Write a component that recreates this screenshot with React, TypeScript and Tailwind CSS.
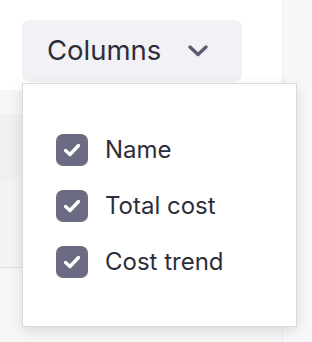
import React from "react";

function Check() {
  return (
    <div className="w-[32px] h-[32px] rounded-[7px] bg-[#6b6b83] flex items-center justify-center shrink-0">
      <svg width="20" height="20" viewBox="0 0 20 20" fill="none">
        <path d="M3.5 10.5 L8 14.5 L16.5 5.5" stroke="white" strokeWidth="3.4" strokeLinecap="round" strokeLinejoin="round" />
      </svg>
    </div>
  );
}

export default function App() {
  const items = ["Name", "Total cost", "Cost trend"];
  return (
    <div
      className="relative w-[312px] h-[342px] overflow-hidden bg-white flex"
      style={{ fontFamily: "Inter, 'Noto Sans', sans-serif" }}
    >
      <div className="w-[282px] flex flex-col">
        <div className="h-[90px] bg-white" />
        <div className="h-[24px] bg-[#f6f6f7]" />
        <div className="h-[68px] bg-[#eff0f2]" />
        <div className="h-[86px] bg-[#f3f3f4] border-b border-[#dcdce2]" />
        <div className="flex-1 bg-[#f7f7f8]" />
      </div>
      <div className="flex-1 border-l border-[#ececf0] bg-[#f8f8fa]" />

      <div className="absolute left-[22px] top-[20px] w-[220px] h-[62px] rounded-lg bg-[#f1f1f6] flex items-center pl-[25px] gap-[26px]">
        <span className="text-[27.5px] leading-none text-[#2e2e3a]">Columns</span>
        <svg width="22" height="14" viewBox="0 0 22 14" fill="none">
          <path d="M3 3 L11 10.5 L19 3" stroke="#5b5b72" strokeWidth="3.4" strokeLinecap="round" strokeLinejoin="round" />
        </svg>
      </div>

      <div className="absolute left-[22px] top-[83px] w-[275px] h-[244px] bg-white border border-[#d9d9df] shadow-[0_4px_12px_rgba(0,0,0,0.12)] flex flex-col gap-[24px] pt-[50px] pl-[33px]">
        {items.map((t) => (
          <div key={t} className="flex items-center gap-[17px] h-[32px]">
            <Check />
            <span className="text-[24px] leading-none text-[#2e2e3a]">{t}</span>
          </div>
        ))}
      </div>
    </div>
  );
}
